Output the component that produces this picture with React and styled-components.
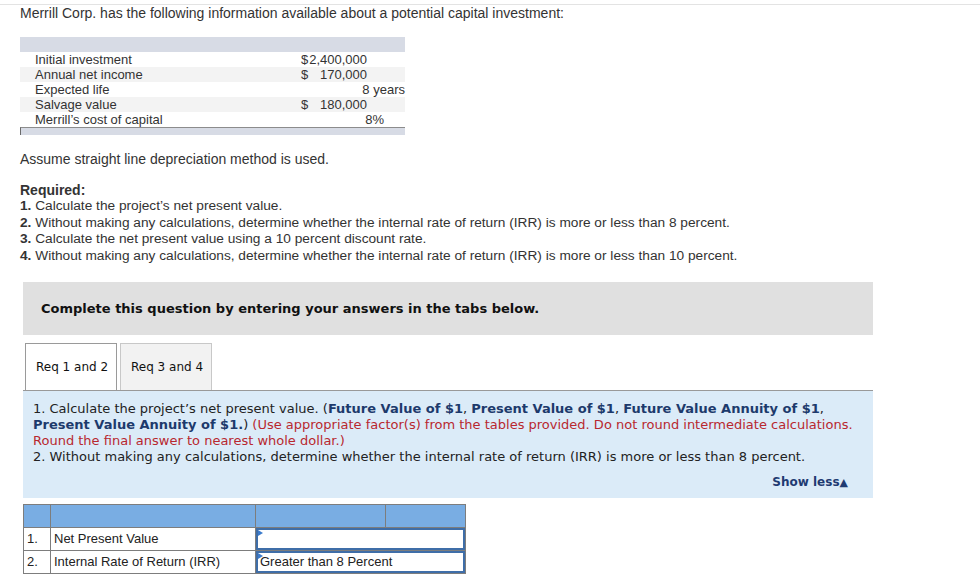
import React from "react";
import styled, { createGlobalStyle } from "styled-components";

const GlobalStyle = createGlobalStyle`
  html, body { margin: 0; padding: 0; background: #fff; }
  body { font-family: "Liberation Sans", Arial, sans-serif; color: #333; }
  * { box-sizing: border-box; }
`;

const Page = styled.div`
  margin-top: 4px;
  border-top: 1px solid #e3e3e3;
  padding: 0 0 0 20px;
  display: flex;
  flex-direction: column;
`;

const Intro = styled.p`
  margin: 0;
  font-size: 14px;
  line-height: 16px;
  color: #333;
`;

const DataTable = styled.div`
  margin-top: 16px;
  width: 385px;
  display: flex;
  flex-direction: column;
`;

const DataHead = styled.div`
  height: 15px;
  background: #d7dbe5;
`;

const DataRow = styled.div`
  display: grid;
  grid-template-columns: 281px 104px;
  height: 15px;
  font-size: 13px;
  line-height: 16px;
  color: #333;
  background: ${(p) => (p.$shade ? "#f3f3f3" : "#fff")};
`;

const DataLabel = styled.div`
  padding-left: 15px;
  white-space: nowrap;
`;

const Money = styled.div`
  display: flex;
  width: 66px;
  justify-content: space-between;
`;

const RightVal = styled.div`
  text-align: right;
  padding-right: ${(p) => p.$pad || 0}px;
`;

const DataFoot = styled.div`
  height: 8px;
  background: #d7dbe5;
  border-top: 1px solid #8c8c8c;
  border-left: 1px solid #6b6b6b;
`;

const Para = styled.p`
  margin: ${(p) => p.$mt || 0}px 0 0;
  font-size: 14px;
  line-height: 16px;
  color: #333;
`;

const ReqList = styled.div`
  margin-top: 16px;
  display: flex;
  flex-direction: column;
  font-size: 13.7px;
  line-height: 16.7px;
  color: #333;
`;

const ReqTitle = styled.div`
  font-size: 14px;
  font-weight: bold;
  line-height: 15px;
`;

const Box = styled.div`
  margin: 17px 0 0 3px;
  width: 850px;
  display: flex;
  flex-direction: column;
  font-family: "DejaVu Sans", Verdana, sans-serif;
`;

const Notice = styled.div`
  height: 53px;
  background: #e0e0e0;
  padding: 0 18px;
  display: flex;
  align-items: center;
  font-size: 13px;
  font-weight: bold;
  color: #111;
`;

const TabBar = styled.div`
  margin-top: 8px;
  display: flex;
  gap: 3px;
  padding-left: 2px;
  border-bottom: 1px solid #999;
`;

const Tab = styled.div`
  width: 92px;
  height: 47px;
  display: flex;
  align-items: center;
  padding-left: 10px;
  font-size: 12px;
  color: #111;
  background: ${(p) => (p.$active ? "#fff" : "#f2f2f2")};
  border: 1px solid ${(p) => (p.$active ? "#9a9a9a" : "#c8c8c8")};
  border-bottom: none;
`;

const Panel = styled.div`
  background: #dbebf8;
  padding: 10px 10px 7px 10px;
  font-size: 13px;
  line-height: 16px;
  color: #222;
  display: flex;
  flex-direction: column;
`;

const Strong = styled.b`
  color: #1d3a6c;
`;

const Hint = styled.span`
  color: #b8282f;
`;

const ShowLess = styled.div`
  margin-top: 9px;
  align-self: flex-end;
  padding-right: 15px;
  font-size: 12px;
  font-weight: bold;
  color: #1f3b72;
`;

const Arrow = styled.span`
  font-size: 11px;
`;

const AnswerTable = styled.table`
  margin: 6px 0 0 3px;
  width: 442px;
  border-collapse: collapse;
  font-family: "Liberation Sans", Arial, sans-serif;
  font-size: 13px;
  color: #222;
  table-layout: fixed;
`;

const HeadCell = styled.th`
  height: 23px;
  background: #79ade3;
  border: 1px solid #7d7d7d;
  padding: 0;
`;

const Cell = styled.td`
  height: 23px;
  border: 1px solid #7d7d7d;
  padding: 0 0 0 3px;
  white-space: nowrap;
`;

const InputCell = styled.td`
  height: 23px;
  border: 1px solid #7d7d7d;
  padding: 0;
`;

const InputBox = styled.div`
  position: relative;
  height: 22px;
  border: 2px solid #3f6ea8;
  background: #fff;
  padding: 0 0 0 2px;
  display: flex;
  align-items: center;
  white-space: nowrap;
  &::before {
    content: "";
    position: absolute;
    left: 0;
    top: 0;
    border-style: solid;
    border-width: 3px 0 3px 5px;
    border-color: transparent transparent transparent #3b7bcc;
  }
`;

const rows = [
  { label: "Initial investment", money: ["$", "2,400,000"] },
  { label: "Annual net income", money: ["$", "170,000"] },
  { label: "Expected life", right: "8 years", pad: 0 },
  { label: "Salvage value", money: ["$", "180,000"] },
  { label: "Merrill\u2019s cost of capital", right: "8%", pad: 21 },
];

export default function App() {
  return (
    <>
      <GlobalStyle />
      <Page>
        <Intro>Merrill Corp. has the following information available about a potential capital investment:</Intro>
        <DataTable>
          <DataHead />
          {rows.map((r, i) => (
            <DataRow key={r.label} $shade={i % 2 === 1}>
              <DataLabel>{r.label}</DataLabel>
              {r.money ? (
                <Money>
                  <span>{r.money[0]}</span>
                  <span>{r.money[1]}</span>
                </Money>
              ) : (
                <RightVal $pad={r.pad}>{r.right}</RightVal>
              )}
            </DataRow>
          ))}
          <DataFoot />
        </DataTable>
        <Para $mt={16}>Assume straight line depreciation method is used.</Para>
        <ReqList>
          <ReqTitle>Required:</ReqTitle>
          <div><b>1.</b> Calculate the project’s net present value.</div>
          <div><b>2.</b> Without making any calculations, determine whether the internal rate of return (IRR) is more or less than 8 percent.</div>
          <div><b>3.</b> Calculate the net present value using a 10 percent discount rate.</div>
          <div><b>4.</b> Without making any calculations, determine whether the internal rate of return (IRR) is more or less than 10 percent.</div>
        </ReqList>
        <Box>
          <Notice>Complete this question by entering your answers in the tabs below.</Notice>
          <TabBar>
            <Tab $active>Req 1 and 2</Tab>
            <Tab>Req 3 and 4</Tab>
          </TabBar>
          <Panel>
            <div>
              1. Calculate the project’s net present value. (<Strong>Future Value of $1</Strong>, <Strong>Present Value of $1</Strong>, <Strong>Future Value Annuity of $1</Strong>, <Strong>Present Value Annuity of $1.</Strong>) <Hint>(Use appropriate factor(s) from the tables provided. Do not round intermediate calculations. Round the final answer to nearest whole dollar.)</Hint>
            </div>
            <div>2. Without making any calculations, determine whether the internal rate of return (IRR) is more or less than 8 percent.</div>
            <ShowLess>Show less<Arrow>▲</Arrow></ShowLess>
          </Panel>
        </Box>
        <AnswerTable>
          <colgroup>
            <col style={{ width: 27 }} />
            <col style={{ width: 205 }} />
            <col style={{ width: 130 }} />
            <col style={{ width: 80 }} />
          </colgroup>
          <thead>
            <tr>
              <HeadCell />
              <HeadCell />
              <HeadCell />
              <HeadCell />
            </tr>
          </thead>
          <tbody>
            <tr>
              <Cell>1.</Cell>
              <Cell>Net Present Value</Cell>
              <InputCell colSpan={2}><InputBox /></InputCell>
            </tr>
            <tr>
              <Cell>2.</Cell>
              <Cell>Internal Rate of Return (IRR)</Cell>
              <InputCell colSpan={2}><InputBox>Greater than 8 Percent</InputBox></InputCell>
            </tr>
          </tbody>
        </AnswerTable>
      </Page>
    </>
  );
}
